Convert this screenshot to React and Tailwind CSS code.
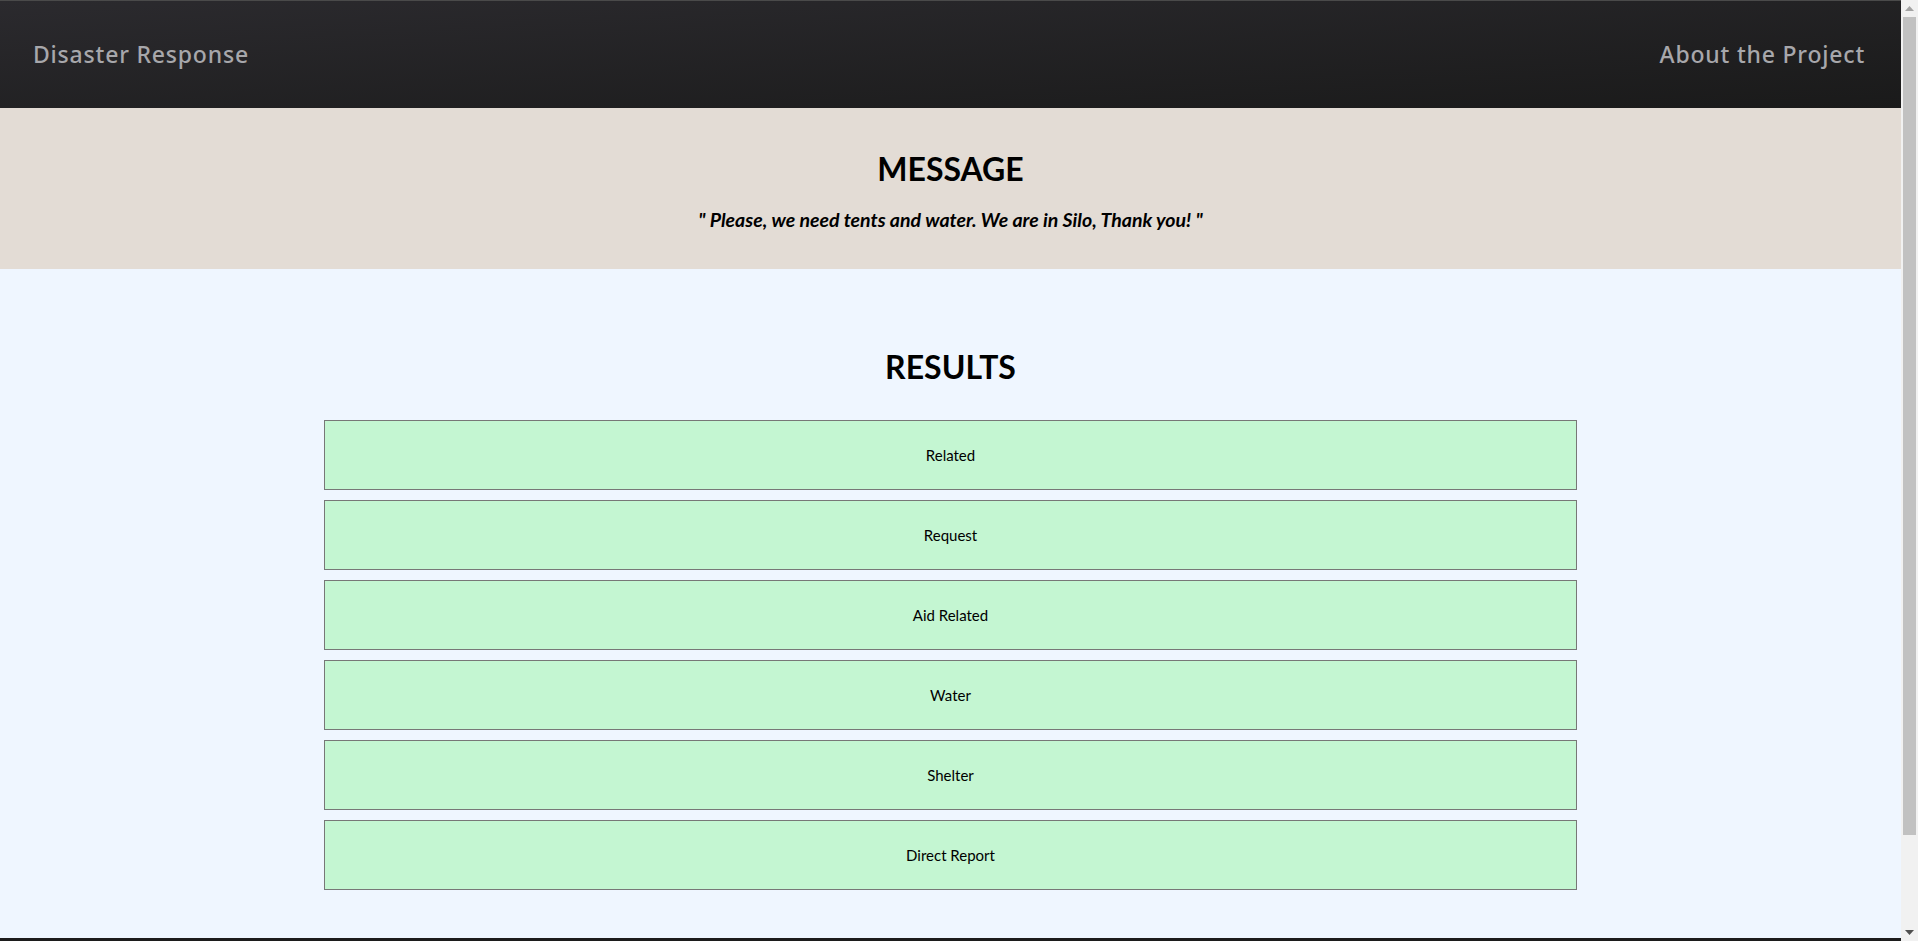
import React from "react";

const results = ["Related", "Request", "Aid Related", "Water", "Shelter", "Direct Report"];

// browser scrollbar as seen in the capture
const ScrollStrip = () => (
  <aside className="w-[17px] shrink-0 bg-[#f1f1f1] flex flex-col items-center">
    <div className="h-[17px] flex items-center justify-center">
      <svg width="9" height="5" viewBox="0 0 9 5">
        <polygon points="0,5 4.5,0 9,5" fill="#a3a3a3" />
      </svg>
    </div>
    <div className="w-[13px] h-[818px] bg-[#c1c1c1]" />
    <div className="flex-1" />
    <div className="h-[17px] flex items-center justify-center">
      <svg width="9" height="5" viewBox="0 0 9 5">
        <polygon points="0,0 9,0 4.5,5" fill="#505050" />
      </svg>
    </div>
  </aside>
);

const App = () => {
  return (
    <div className="h-screen flex overflow-hidden font-['Lato','Liberation_Sans',sans-serif] text-black">
      <main className="flex-1 min-w-0 overflow-hidden bg-[#eff6ff]">
        {/* Navbar */}
        <nav className="h-[108px] border-t border-[#4a4a4a] bg-gradient-to-br from-[#2b2a2e] to-[#1a1a1a] flex items-center justify-between pl-[33px] pr-[36px]">
          <a href="#" className="text-[23px] font-medium text-[#a7a7ab] font-['Noto_Sans','Liberation_Sans',sans-serif] tracking-[0.8px]">
            Disaster Response
          </a>
          <a href="#" className="text-[23px] font-medium text-[#a7a7ab] font-['Noto_Sans','Liberation_Sans',sans-serif] tracking-[0.8px]">
            About the Project
          </a>
        </nav>

        {/* Message */}
        <section className="bg-[#e3dcd5] pt-[43px] pb-[36px] text-center">
          <h1 className="text-[32px] leading-[35px] font-bold">MESSAGE</h1>
          <p className="mt-[20px] text-[19.5px] leading-[27px] font-bold italic">
            " Please, we need tents and water. We are in Silo, Thank you! "
          </p>
        </section>

        {/* Results */}
        <section className="pt-[80px] pb-[48px]">
          <h2 className="text-center text-[32px] leading-[35px] font-bold">RESULTS</h2>
          <div className="mt-[36px] mx-auto w-2/3 px-[7px] flex flex-col gap-[10px]">
            {results.map((r) => (
              <div
                key={r}
                className="h-[70px] border border-[#777777] bg-[#c4f6d2] flex items-center justify-center text-[15px]"
              >
                {r}
              </div>
            ))}
          </div>
        </section>

        <footer className="h-[106px] bg-[#1c1c1c]" />
      </main>
      <ScrollStrip />
    </div>
  );
};

export default App;
